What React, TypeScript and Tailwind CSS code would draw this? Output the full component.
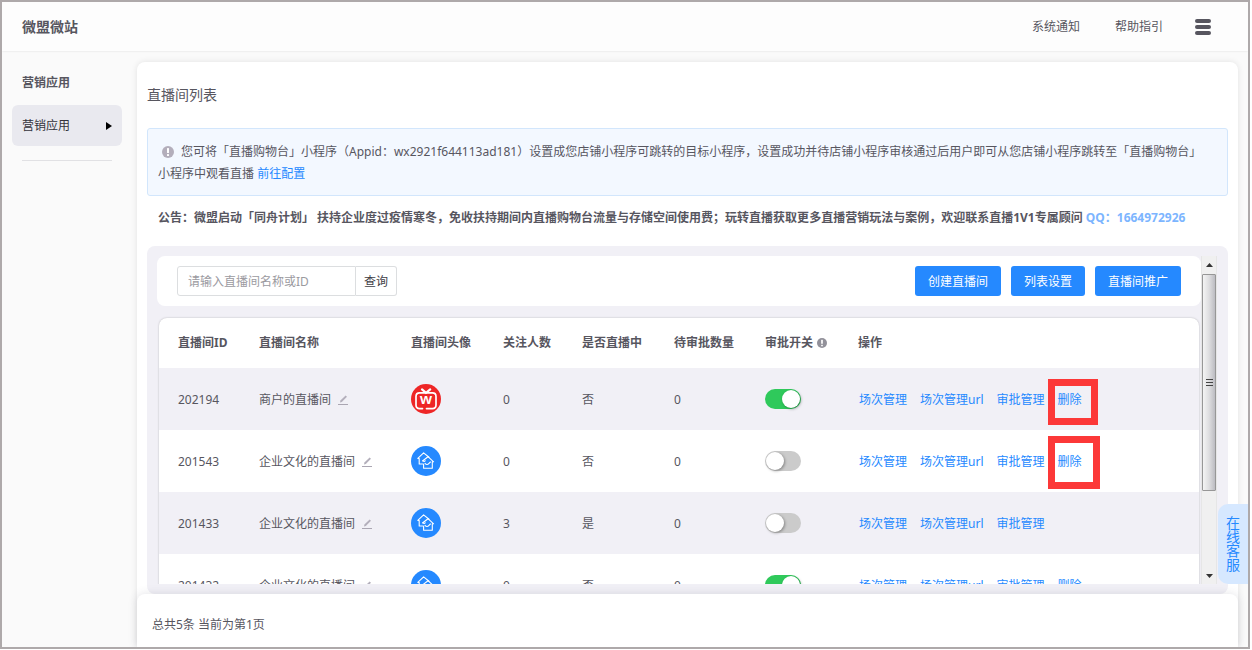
import type { FC } from "react";

type Room = {
  id: string;
  name: string;
  avatar: "tv" | "house";
  followers: number;
  live: string;
  pending: number;
  approval: boolean;
  removable: boolean;
  mark?: string;
};

const rooms: Room[] = [
  {
    id: "202194",
    name: "商户的直播间",
    avatar: "tv",
    followers: 0,
    live: "否",
    pending: 0,
    approval: true,
    removable: true,
    mark: "-top-[11px] h-[46px] w-[50px]",
  },
  {
    id: "201543",
    name: "企业文化的直播间",
    avatar: "house",
    followers: 0,
    live: "否",
    pending: 0,
    approval: false,
    removable: true,
    mark: "-top-[16px] h-[53px] w-[52px]",
  },
  {
    id: "201433",
    name: "企业文化的直播间",
    avatar: "house",
    followers: 3,
    live: "是",
    pending: 0,
    approval: false,
    removable: false,
  },
  {
    id: "201432",
    name: "企业文化的直播间",
    avatar: "house",
    followers: 0,
    live: "否",
    pending: 0,
    approval: true,
    removable: true,
  },
];

const InfoIcon: FC<{ className: string }> = ({ className }) => (
  <svg viewBox="0 0 12 12" className={className} aria-hidden="true">
    <circle cx="6" cy="6" r="6" fill="currentColor" />
    <rect x="5" y="2" width="2" height="5" rx="0.5" fill="#fff" />
    <rect x="5" y="8" width="2" height="2" rx="0.5" fill="#fff" />
  </svg>
);

const EditIcon: FC = () => (
  <svg viewBox="0 0 10 10" className="size-[10px]" aria-hidden="true">
    <path d="M2 7.6 2.4 5.6 7.6 0.4 9 1.8 3.8 7Z" fill="#b3afbb" />
    <rect y="9" width="10" height="1" fill="#aaa6b2" />
  </svg>
);

const TvAvatar: FC = () => (
  <svg viewBox="0 0 30 30" className="size-[30px]" aria-hidden="true">
    <circle cx="15" cy="15" r="15" fill="#ee2626" />
    <g fill="none" stroke="#fff" strokeWidth="1.7" strokeLinecap="round">
      <path d="M11 5.4 15 8.8 19.2 5.4" strokeWidth="2.2" />
      <path d="M11.5 24.6H8.6Q5 24.6 5 21V12.4Q5 8.8 8.6 8.8H21.4Q25 8.8 25 12.4V21Q25 24.6 21.4 24.6H15.5" />
    </g>
    <text
      x="15"
      y="20.4"
      textAnchor="middle"
      fontSize="15"
      fontWeight="600"
      fill="#fff"
    >
      w
    </text>
  </svg>
);

const HouseAvatar: FC = () => (
  <svg viewBox="0 0 30 30" className="size-[30px]" aria-hidden="true">
    <circle cx="15" cy="15" r="15" fill="#2589ff" />
    <g
      fill="none"
      stroke="#fff"
      strokeWidth="1.1"
      strokeLinecap="round"
      strokeLinejoin="round"
    >
      <path d="M11.6 18H8.2V12.6L6.8 12.4 12.6 6.9 18 11.2" />
      <path d="M11.8 14.8 17 10.7 22.6 15.8H21.3V22.2H12.6V18" />
      <path d="M11.8 14.8Q13.4 16 14.2 14.8M14 17.4Q16 19.6 18 17.4L19.4 16" />
    </g>
  </svg>
);

const ScrollBar: FC = () => (
  <div
    className="flex w-4 flex-col border-x border-[#e6e6e6] bg-[#f0f0f0]"
    aria-hidden="true"
  >
    <div className="flex h-[18px] items-center justify-center">
      <svg viewBox="0 0 7 4" className="h-1 w-[7px]">
        <path d="M0 4 3.5 0 7 4Z" fill="#333" />
      </svg>
    </div>
    <div className="flex h-[217px] flex-col items-center justify-center gap-[2px] rounded-[1px] border border-[#979797] bg-linear-to-r from-[#f4f4f4] via-[#dedee0] to-[#bcbcc2]">
      <div className="h-px w-[7px] bg-[#444]"></div>
      <div className="h-px w-[7px] bg-[#444]"></div>
      <div className="h-px w-[7px] bg-[#444]"></div>
    </div>
    <div className="mt-auto flex h-[17px] items-center justify-center">
      <svg viewBox="0 0 7 4" className="h-1 w-[7px]">
        <path d="M0 0 3.5 4 7 0Z" fill="#333" />
      </svg>
    </div>
  </div>
);

const Header: FC = () => (
  <header className="flex h-[49px] shrink-0 items-center bg-[#fdfdfd] pr-[37px] pl-5 shadow-[0_0_2px_rgba(0,0,0,0.12)]">
    <h1 className="text-sm font-bold">微盟微站</h1>
    <nav className="ml-auto flex items-center gap-[35px]">
      <a href="#notice">系统通知</a>
      <a href="#help">帮助指引</a>
      <button type="button" aria-label="菜单" className="-ml-[3px] grid gap-[2px]">
        <span className="block h-1 w-4 rounded-full bg-[#57565f]"></span>
        <span className="block h-1 w-4 rounded-full bg-[#57565f]"></span>
        <span className="block h-1 w-4 rounded-full bg-[#57565f]"></span>
      </button>
    </nav>
  </header>
);

const SideBar: FC = () => (
  <aside className="w-[135px] shrink-0 px-[10px] pt-[22px]">
    <h2 className="pl-[10px] font-bold">营销应用</h2>
    <a
      href="#marketing"
      className="mt-3 flex h-[41px] w-[110px] items-center justify-between rounded-md bg-[#e9e9ef] px-[10px] text-[#33323b]"
    >
      营销应用
      <svg viewBox="0 0 6 8" className="h-2 w-[6px]" aria-hidden="true">
        <path d="M0 0 6 4 0 8Z" fill="#000" />
      </svg>
    </a>
    <hr className="mt-[14px] mr-[15px] ml-[10px] border-[#e1e1e4]" />
  </aside>
);

const ToolBar: FC = () => (
  <div className="flex items-center justify-between rounded-lg bg-white px-5 py-[10px]">
    <form className="flex h-[30px]" onSubmit={(e) => e.preventDefault()}>
      <input
        type="text"
        aria-label="直播间名称或ID"
        placeholder="请输入直播间名称或ID"
        className="w-[179px] rounded-l-[3px] border border-[#dcdee0] bg-white px-[10px] pt-[2px] outline-none placeholder:text-[#9b9a9f]"
      />
      <button
        type="submit"
        className="w-[41px] rounded-r-[3px] border border-l-0 border-[#dcdee0] bg-white pt-[2px] text-[#3f3e46]"
      >
        查询
      </button>
    </form>
    <div className="flex gap-[10px] text-white">
      <button type="button" className="h-[30px] rounded-[3px] bg-[#2589ff] px-[13px] pt-[2px]">
        创建直播间
      </button>
      <button type="button" className="h-[30px] rounded-[3px] bg-[#2589ff] px-[13px] pt-[2px]">
        列表设置
      </button>
      <button type="button" className="h-[30px] rounded-[3px] bg-[#2589ff] px-[13px] pt-[2px]">
        直播间推广
      </button>
    </div>
  </div>
);

const RoomTable: FC = () => (
  <div className="mx-[2px] mt-3 overflow-hidden rounded-t-lg bg-white shadow-[0_0_2px_rgba(0,0,0,0.25)]">
    <table className="w-full table-fixed text-left">
      <colgroup>
        <col className="w-[81px]" />
        <col className="w-[152px]" />
        <col className="w-[92px]" />
        <col className="w-[79px]" />
        <col className="w-[92px]" />
        <col className="w-[91px]" />
        <col className="w-[93px]" />
        <col />
      </colgroup>
      <thead>
        <tr className="h-[50px] font-bold whitespace-nowrap">
          <th className="pl-[19px]">直播间ID</th>
          <th className="pl-[19px]">直播间名称</th>
          <th className="pl-[19px]">直播间头像</th>
          <th className="pl-[19px]">关注人数</th>
          <th className="pl-[19px]">是否直播中</th>
          <th className="pl-[19px]">待审批数量</th>
          <th className="pl-[19px]">
            <span className="flex items-center gap-1">
              审批开关
              <InfoIcon className="size-[10px] shrink-0 text-[#92919a]" />
            </span>
          </th>
          <th className="pl-[19px]">操作</th>
        </tr>
      </thead>
      <tbody>
        {rooms.map((room) => (
          <tr key={room.id} className="h-[62px] whitespace-nowrap odd:bg-[#f1f0f6]">
            <td className="pt-[2px] pl-[19px]">{room.id}</td>
            <td className="pt-[2px] pl-[19px]">
              <span className="flex items-center gap-[7px]">
                {room.name}
                <button type="button" aria-label="编辑">
                  <EditIcon />
                </button>
              </span>
            </td>
            <td className="pl-[19px]">
              {room.avatar === "tv" ? <TvAvatar /> : <HouseAvatar />}
            </td>
            <td className="pt-[2px] pl-[19px]">{room.followers}</td>
            <td className="pt-[2px] pl-[19px]">{room.live}</td>
            <td className="pt-[2px] pl-[19px]">{room.pending}</td>
            <td className="pl-[19px]">
              <input
                type="checkbox"
                role="switch"
                aria-label={`${room.id} 审批开关`}
                defaultChecked={room.approval}
                className="block h-5 w-9 appearance-none rounded-full bg-[#cbcbcb] p-px before:block before:size-[18px] before:rounded-full before:bg-white before:shadow-[1px_1px_3px_rgba(0,0,0,0.35)] checked:bg-[#2fc95b] checked:before:ml-4"
              />
            </td>
            <td className="pt-[2px] pl-5">
              <div className="flex gap-[13px] text-[#2589ff]">
                <a href="#session">场次管理</a>
                <a href="#session-url">场次管理url</a>
                <a href="#approval">审批管理</a>
                {room.removable && (
                  <a href="#delete" className="relative">
                    删除
                    {room.mark && (
                      <span
                        className={`absolute -left-[10px] border-[7px] border-[#fc3838] ${room.mark}`}
                      ></span>
                    )}
                  </a>
                )}
              </div>
            </td>
          </tr>
        ))}
      </tbody>
    </table>
  </div>
);

const App: FC = () => {
  return (
    <div className="h-screen bg-white pr-[2px] pb-px font-['Noto_Sans','Noto_Sans_CJK_SC',sans-serif] text-[12px] leading-5 text-[#57565f]">
      <div className="relative flex h-full flex-col overflow-hidden border-2 border-[#aea9aa] bg-[#fafafa]">
        <Header />
        <div className="flex min-h-0 flex-1">
          <SideBar />
          <main className="mt-[11px] mr-[10px] flex min-w-0 flex-1 flex-col rounded-t-lg bg-white shadow-[0_0_6px_rgba(0,0,0,0.1)]">
            <div className="flex min-h-0 flex-1 flex-col px-[10px] pt-[23px]">
              <h2 className="text-sm">直播间列表</h2>
              <p className="mt-[23px] rounded-[3px] border border-[#d2e6fc] bg-[#f3f8ff] pt-3 pr-7 pb-[10px] pl-[10px] leading-[22px]">
                <InfoIcon className="mr-[7px] ml-1 inline size-3 align-[-2px] text-[#b3aebb]" />
                您可将「直播购物台」小程序（Appid：wx2921f644113ad181）设置成您店铺小程序可跳转的目标小程序，设置成功并待店铺小程序审核通过后用户即可从您店铺小程序跳转至「直播购物台」小程序中观看直播{" "}
                <a href="#config" className="text-[#2589ff]">
                  前往配置
                </a>
              </p>
              <p className="mt-3 px-[11px] font-bold">
                公告：微盟启动「同舟计划」 扶持企业度过疫情寒冬，免收扶持期间内直播购物台流量与存储空间使用费；玩转直播获取更多直播营销玩法与案例，欢迎联系直播1V1专属顾问{" "}
                <span className="text-[#7cb5ff]">QQ：1664972926</span>
              </p>
              <section className="mt-[18px] flex min-h-0 flex-1 rounded-lg bg-[#f1f0f6] py-[10px] pr-[11px] pl-[10px]">
                <div className="min-w-0 flex-1 overflow-hidden">
                  <ToolBar />
                  <RoomTable />
                </div>
                <ScrollBar />
              </section>
            </div>
            <footer className="rounded-t-lg bg-white px-[15px] pt-[21px] pb-3 shadow-[0_0_10px_rgba(60,60,90,0.15)]">
              总共5条 当前为第1页
            </footer>
          </main>
        </div>
        <button
          type="button"
          className="absolute right-0 bottom-[63px] flex h-20 w-[30px] items-center justify-center rounded-l-[10px] bg-[#d6e8ff] px-2 text-sm leading-[14px] text-[#2589ff]"
        >
          在线客服
        </button>
      </div>
    </div>
  );
};

export default App;
